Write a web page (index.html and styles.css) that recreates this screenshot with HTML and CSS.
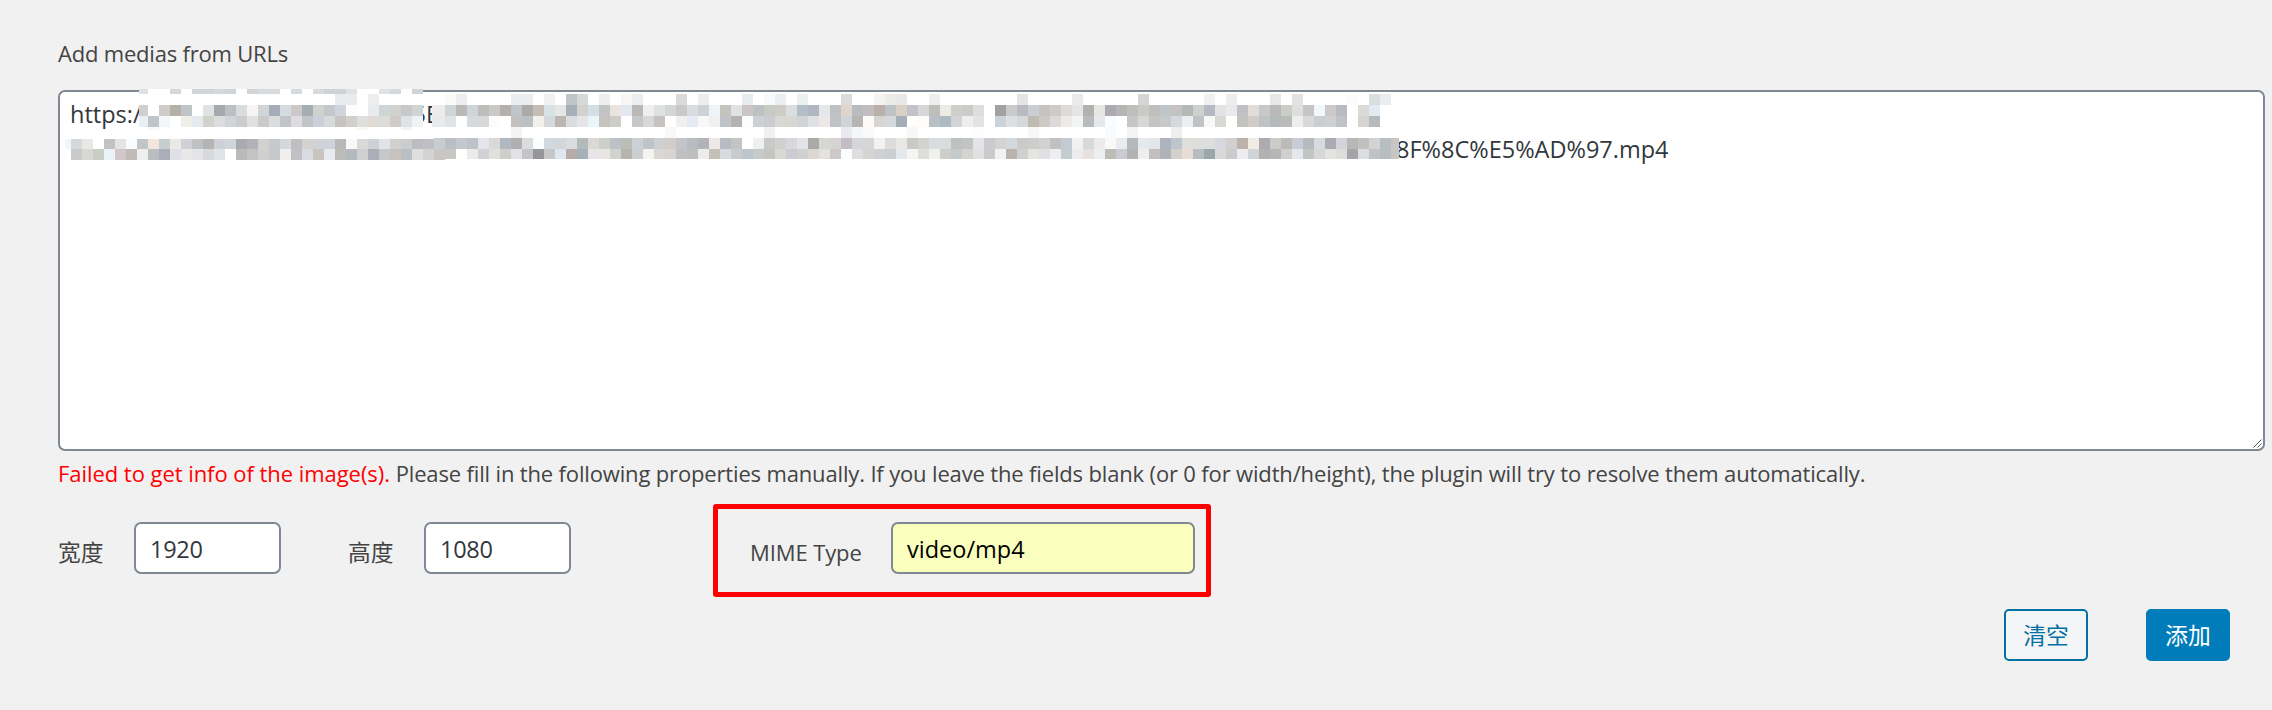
FILE: index.html
```html
<!DOCTYPE html>
<html lang="zh-CN">
<head>
<meta charset="utf-8">
<title>Add medias from URLs</title>
<link rel="stylesheet" href="styles.css">
</head>
<body>
<main class="panel">
  <div class="heading"><span class="t-head">Add medias from URLs</span></div>
  <div class="urls">
    <div class="line"><span class="t-https">https:/</span><span class="t-frag">5E</span></div>
    <div class="line"><span class="t-tail">8F%8C%E5%AD%97.mp4</span></div>
    <svg class="mosaic" id="mosaic" width="1344" height="72" viewBox="64 89 1344 72" shape-rendering="crispEdges"></svg>
    <svg class="grip" width="9" height="9" viewBox="0 0 9 9"><path d="M.5 8.5l8-8M4.500 8.500l4-4" fill="none" stroke="#555" stroke-width="1"/></svg>
  </div>
  <p class="message"><span class="error">Failed to get info of the image(s).</span> <span class="t-msg">Please fill in the following properties manually. If you leave the fields blank (or 0 for width/height), the plugin will try to resolve them automatically.</span></p>
  <div class="fields">
    <label class="label label-cjk">宽度</label><div class="input"><span class="t-num">1920</span></div>
    <label class="label label-cjk label-height">高度</label><div class="input"><span class="t-num">1080</span></div>
    <div class="highlight">
      <label class="label label-mime"><span class="t-mime">MIME Type</span></label><div class="input input-mime"><span class="t-video">video/mp4</span></div>
    </div>
  </div>
  <div class="actions">
    <button class="button">清空</button>
    <button class="button primary">添加</button>
  </div>
</main>
<script src="mosaic.js"></script>
</body>
</html>
```
FILE: styles.css
```css
* { box-sizing: border-box; }
body {
  margin: 0;
  background: #f1f1f1;
  color: #444;
  font-family: "Open Sans", "Noto Sans CJK SC", sans-serif;
  font-size: 22px;
}
.panel {
  display: flex;
  flex-direction: column;
  height: 710px;
  padding: 34px 7px 0 58px;
  overflow: hidden;
}
.heading { height: 56px; line-height: 38px; white-space: nowrap; }
.t-head { letter-spacing: -.2px; }
.urls {
  position: relative;
  height: 361px;
  padding: 5px 10px;
  border: 2px solid #7e8993;
  border-radius: 7px;
  background: #fff;
  color: #32373c;
  font-size: 23.5px;
}
.line { display: flex; height: 35px; line-height: 35px; white-space: nowrap; }
.t-frag { margin-left: 271px; }
.t-tail { margin-left: 1326px; }
.mosaic { position: absolute; left: 4px; top: -3px; }
.grip { position: absolute; right: 1px; bottom: 1px; }
.message { height: 53px; margin: 0; padding-top: 3px; line-height: 38px; white-space: nowrap; }
.error { color: #f00; letter-spacing: -.05px; }
.t-msg { letter-spacing: -.155px; }
.fields { display: flex; height: 93px; align-items: flex-start; }
.label { margin-top: 18px; height: 52px; line-height: 61px; }
.label-cjk { width: 76px; font-family: "Noto Sans CJK SC", sans-serif; font-size: 22.75px; line-height: 60px; }
.label-height { margin-left: 67px; }
.input {
  width: 147px;
  height: 52px;
  margin-top: 18px;
  padding-left: 14px;
  border: 2px solid #7e8993;
  border-radius: 7px;
  background: #fff;
  color: #32373c;
  font-size: 23.5px;
  line-height: 50px;
}
.t-num { letter-spacing: -.3px; }
.highlight {
  display: flex;
  width: 498px;
  height: 93px;
  margin-left: 142px;
  border: 5px solid #f00;
  border-radius: 3px;
}
.highlight .label, .highlight .input { margin-top: 13px; }
.label-mime { width: 173px; padding-left: 32px; letter-spacing: -.1px; }
.input-mime { width: 304px; background: #faffbd; color: #000; }
.actions { display: flex; justify-content: flex-end; gap: 58px; padding: 12px 35px 0 0; }
.button {
  width: 84px;
  height: 52px;
  padding: 0 0 2px;
  border: 2px solid #0071a1;
  border-radius: 5px;
  background: #f3f5f6;
  color: #0071a1;
  font: 22.75px "Noto Sans CJK SC", sans-serif;
}
.primary { border-color: #007cba; background: #007cba; color: #fff; }
```
FILE: mosaic.js
```js
// Pixelated cover over the private part of the address: 11px cells starting at x = 71.
const svg = document.getElementById('mosaic');
function rect(x, y, w, h, fill) {
  const r = document.createElementNS('http://www.w3.org/2000/svg', 'rect');
  Object.entries({ x, y, width: w, height: h, fill }).forEach(([k, v]) => r.setAttribute(k, v));
  svg.appendChild(r);
}
rect(139, 89, 284, 41, '#fff');
rect(432, 94, 968, 44, '#fff');
rect(65, 138, 1334, 22, '#fff');
function cell(i, y, h, c) {
  let x = 71 + 11 * i, end = x + 11;
  if (y < 138 && i === 6) x = 139;
  if (y < 138 && i === 33) x = 432;
  if (i === 120) end = 1399;
  rect(x, y, end - x, h, '#' + c);
}
function run(start, y, h, list) {
  list.trim().split(/\s+/).forEach((c, n) => { if (c !== '-') cell(start + n, y, h, c); });
}
function sparse(y, h, map) {
  for (const [i, c] of Object.entries(map)) cell(+i, y, +i < 32 && y === 127 ? 3 : h, c);
}
sparse(89, 5, { 6: 'dfe1e3', 9: 'd5d8db', 11: 'd1d5d8', 12: 'd1d5d8', 13: 'd6d9db', 14: 'd1d5d8', 16: 'd1d5d8', 17: 'd8dbdd', 18: 'd8dbdd', 20: 'd7dadc', 22: 'd8dbdd', 23: 'cfd3d6', 24: 'cfd3d6', 25: 'dfe1e3', 28: 'dfe1e3', 29: 'd6d9dc', 31: 'd1d5d8' });
sparse(94, 11, { 24: 'e9ecee', 25: 'e9ecee', 27: 'eceef0', 34: 'fafaf8', 35: 'edeeef', 40: 'ebecee', 41: 'ebecee', 43: 'f0f1f2', 45: 'bfc4c7', 46: 'd5d9da', 48: 'eceeef', 50: 'f8f6f3', 51: 'ebedee', 55: 'dbdad8', 57: 'ebedef', 61: 'e7ecee', 63: 'f8f9fb', 64: 'ecefef', 66: 'edf0f1', 70: 'dbdbd9', 73: 'f5f3f1', 74: 'ebebea', 75: 'eae8e6', 78: 'eeeeef', 86: 'e4e4e5', 91: 'e8eaec', 97: 'd5d5d3', 103: 'f0f0ef', 105: 'eeedeb', 109: 'e7e7e6', 111: 'e4e3e1', 116: 'fcfcfa', 118: 'dadede', 119: 'ebecee' });
run(6, 105, 11, `cfcfd0 - cecbc9 b5b1a9 bfc4c9 - dfe3e3 a5a9ac bbc0c4 dadbdd f8f4f3 d0d5d7 a5adba d6dbdf cbc9c8 a4adb0 ced1ce c3c8cb d0d5dc fdfdfd - e9eaee cfd5d5 d1d2ce c8c8c8 d0d4d5
- edebeb d0d5d7 bab9b8 cfd4d7 bfbdbb c9c9c7 b5b0ad bfc5c8 aba9a9 c6beb5 d7e2e3 e6e6e4 a6afb6 d2d1cf d3dfe2 c1c3c4 eae3df e3e8f0 bab9b7 f0efed dfe0e0 d3d6d7 cbc9c7 d9dcde cfd2d5 eff4f9 c5c3c0 e0e2e3 cbc5c5 bdc1c4 c8cbc3 cfccc8 dbdee0 b2bfc8 afb7c0 e5e8ea bec2c4 ded5cd b8bcc1 c2bdc0 bcb1aa bec2c5 dad1c4
c3c2c8 d7d7d7 bdbdbc eeebe5 cececb cccbca dededf - a1a1a0 cacacb b9bbc1 c9cdd6 c6c4c2 cecbc9 dddbd9 e4e6e4 b3b2b1 e6e6e4 acabb0 b7b4b3 bfc0be cbcac8 bfbfbd bfc5c9 c4c3c1 b4b8b7 d0d0cf b4b9c2 e3e3e3 e9eaed c0c0c6 e1deda c7c8c9 b9b9b8 cbcdcb dededd c5c5c6 f2f7f9 cbc9c9 b8bcc0 - dadad7 e4eaf1`);
run(6, 116, 11, `ebeff5 bec5cb f4f7f9 - efeee9 e5eaee d1d2cc dbddde cfd5da cbcccb e0dfe1 ccc9cb dcdcdd c2c5c8 dddde0 c1c5c9 cacfd9 d9dadc c6c4c2 d1d0cc dfdfe0 e2dad4 dcdddb cecbc9 dfe1e5 f0f3f4
- e8eaec dfe3e6 - d6dadd d8d8d8 fdfcfa - c2c1bf bcc0c3 f1f0eb d3d9dc bdb6af d9dde0 e3e5e6 eaf5f9 c6c2be cccdc8 - c6c7c9 d7d8da c5c2c0 - f2f0ee e6eaf4 f8f8f8 eff1f0 bfc3c6 b4b3b1 fafcfd cdd0d5 cacccf d8d9d3 d7d8d1 d0d4d7 dfe0e2 ece8e5 bfc3c5 d0d4d9 b7b6b4 fcfbf8 d6d5d1 d5d9de a5aeb6
fffefb fdfcf9 b8c0c6 acbac1 d1d5d8 edeef0 e4e3e1 - ccd2dc dddfe2 d6d9dc bfbab2 cdc9c5 dadada eeeae7 f2f4f6 b8bbb9 e6e8ec f8fcfd - c6c6c6 d7d8d5 c4c5c3 c6c8ca d6d9db ebeff2 bfc3c6 f8f8f8 d9d8d5 - c3c2be d1ccc8 bfc3c6 b4b9ba babcb9 edeeed d8dad9 cacdd2 d0cfd3 bfc2c6 - d5d4d0 b5babd`);
sparse(127, 11, { 7: 'f7f9fb', 26: 'fcf6f1', 30: 'f3f3f4', 40: 'f6f4f3', 54: 'faf8f7', 63: 'f0f0f1', 70: 'e9eaed', 71: 'f5f6f8', 72: 'faf9f9', 76: 'f7f7f7', 82: 'fdfdfd', 87: 'f7f7f7', 94: 'f8fbfd', 96: 'f2f4f6', 100: 'f0eeed' });
rect(65, 139, 6, 10, '#f5f5f5');
run(0, 139, 10, `d3d9dd e8e8e6 - c2c1c3 e4e4e3 fafbfc c1c5c7 f1e5dc c6ced0 e9e9e6 cfd1d6 bfc2c3 b5b4b2 ced1d8 d0d5db aaa9ac b2b1b7 d1d2ce c5c9cb d6d9dc bfbfc1 d4d2ce cfd3d8 cfd2d8 b8b8b6 f8f8f6 d9d9d7 ced1d5 e0e3e8 d0d1cf cbcccb b9bec3 c0c0c2`);
run(33, 138, 11, `c8ccce b8c0c3 c4c7cd bec3c7 e3e5ea dbd8da b0b8c2 b0b0b3 dadddd fcfdfe d1d8e0 d3d7da dadde0 b4b9b9 dbd8d6 ccceca bdc1c5 bbbeb7 ccd0d7 c0c5c9 cecfd0 d3cdca c3c5ca b8bbc0 b2b2b8 eee9e6 b8bbc1 c4c4c4 - edf0ef c9c9c8 d0d0cf d8d8da e1e5e9 a9a9a8 d6d7d3 d4d4d3 c4bcc6 d5d6d8 d5d6d7 f3f2f0 dcdcda e8e7e3
c9cac5 d3d2d0 d9dce1 d8dcdd bdc1c2 c2c4c4 e2e6e8 cbcacd d2d4d3 d3d8dd cacac9 cecdcb d2d2d2 c1c1c2 c3cad2 f2f1ef d8dad9 ebebec faf9f8 e8ecef b4babc e5eaed e2e6e6 aeb4be bdc5ce dfdeda dcdedc dddfde d5d8df d1cfcf bdb1ac f1ebe4 adabaf cbcbc7 bbbbba c8ccd6 b5babc d7dade adabb2 d1d4da b7b7b6 c0c0be d3d3d2 b6bec2 c8c6c5`);
run(0, 149, 11, `c9cac9 d7d7d4 caccc6 eaf4f8 d1c7c8 c1bbb8 efeff0 bbbdc0 aaaebb dfe1e7 e9e8e8 e5e4e8 d6dadd dfe4e8 - bbb9b9 c3c3c3 d0d1cf c5c9cc f0efeb c1c0c5 dadbde c9c4be e7eaee bdbcb8 b2bac0 cfcfd0 abaeb8 c5c9cb c7c2bd babfc3 dededc d2d2d2 c8c7c5`);
run(34, 149, 10, `c8c7c4 - ebebeb d1d2d5 e0e0de cfcecb e2e2e4 c4c4c6 969698 c7c6c8 dee6ee b6adab a5b0b8 e8e5e8 e8e6e3 d2d2d3 b6b6ae cccfd2 f4f3ee d9d8d4 d7d5d1 c1c1c4 bebfc1 eeedeb c5c1ba d7dbdd c8ccce bdc6cf c7cbca c5c6c0 d9d9d4 cccbd2 cfd1d0 ddd7d4 e3e2e0 cdc9ca fcfefd dddedf d4d4d2 cfd2d5 cbcfd0 e3e9ed
f5f5f4 dfdedb f0f0ef cecec8 c2cacb d5d4d1 e2e1df cbcacd f0f3f2 bab3af d1d0d1 e5e4e1 dee0e3 eeeef0 c3cccf ececec e7e2de edf0f2 bbbcb6 c8cbd1 b4b3b3 edefee c2bfbd b0b3b9 d3d1cc e9dcd6 b7bcc1 9ca6ad d9d9d9 c9cbcc ededef d0d4d8 b3b1af b5b7b6 cfcfcf e3e8ec c3c5c5 d7d7d6 e2e4e2 dedddc a5a4a9 dbdedf bfc3c6 b8bdc0 c8c5c2`);
```
